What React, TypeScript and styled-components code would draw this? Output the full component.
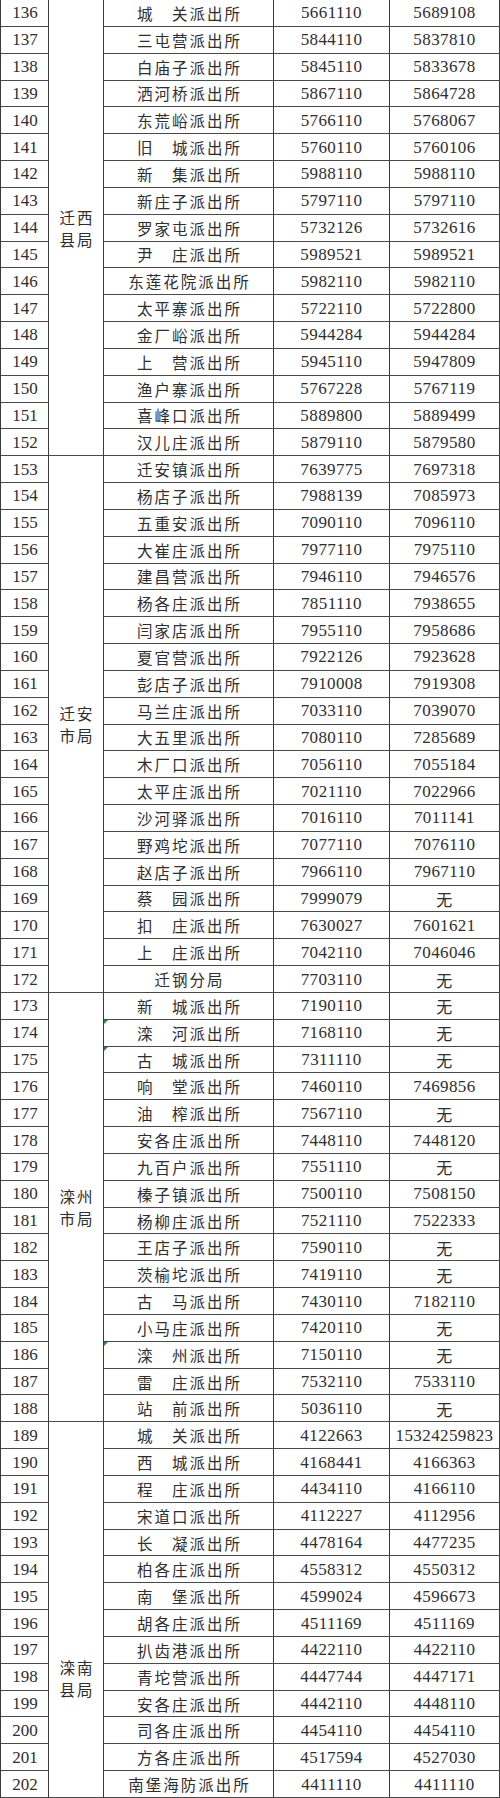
import styled, { createGlobalStyle } from "styled-components";

type Station = [number, string, string, string];

interface Group {
  label: [string, string];
  shift?: number;
  rows: Station[];
}

const GROUPS: Group[] = [
  {
    label: ["迁西", "县局"],
    rows: [
      [136, "城　关派出所", "5661110", "5689108"],
      [137, "三屯营派出所", "5844110", "5837810"],
      [138, "白庙子派出所", "5845110", "5833678"],
      [139, "洒河桥派出所", "5867110", "5864728"],
      [140, "东荒峪派出所", "5766110", "5768067"],
      [141, "旧　城派出所", "5760110", "5760106"],
      [142, "新　集派出所", "5988110", "5988110"],
      [143, "新庄子派出所", "5797110", "5797110"],
      [144, "罗家屯派出所", "5732126", "5732616"],
      [145, "尹　庄派出所", "5989521", "5989521"],
      [146, "东莲花院派出所", "5982110", "5982110"],
      [147, "太平寨派出所", "5722110", "5722800"],
      [148, "金厂峪派出所", "5944284", "5944284"],
      [149, "上　营派出所", "5945110", "5947809"],
      [150, "渔户寨派出所", "5767228", "5767119"],
      [151, "喜峰口派出所", "5889800", "5889499"],
      [152, "汉儿庄派出所", "5879110", "5879580"],
    ],
  },
  {
    label: ["迁安", "市局"],
    rows: [
      [153, "迁安镇派出所", "7639775", "7697318"],
      [154, "杨店子派出所", "7988139", "7085973"],
      [155, "五重安派出所", "7090110", "7096110"],
      [156, "大崔庄派出所", "7977110", "7975110"],
      [157, "建昌营派出所", "7946110", "7946576"],
      [158, "杨各庄派出所", "7851110", "7938655"],
      [159, "闫家店派出所", "7955110", "7958686"],
      [160, "夏官营派出所", "7922126", "7923628"],
      [161, "彭店子派出所", "7910008", "7919308"],
      [162, "马兰庄派出所", "7033110", "7039070"],
      [163, "大五里派出所", "7080110", "7285689"],
      [164, "木厂口派出所", "7056110", "7055184"],
      [165, "太平庄派出所", "7021110", "7022966"],
      [166, "沙河驿派出所", "7016110", "7011141"],
      [167, "野鸡坨派出所", "7077110", "7076110"],
      [168, "赵店子派出所", "7966110", "7967110"],
      [169, "蔡　园派出所", "7999079", "无"],
      [170, "扣　庄派出所", "7630027", "7601621"],
      [171, "上　庄派出所", "7042110", "7046046"],
      [172, "迁钢分局", "7703110", "无"],
    ],
  },
  {
    label: ["滦州", "市局"],
    rows: [
      [173, "新　城派出所", "7190110", "无"],
      [174, "滦　河派出所", "7168110", "无"],
      [175, "古　城派出所", "7311110", "无"],
      [176, "响　堂派出所", "7460110", "7469856"],
      [177, "油　榨派出所", "7567110", "无"],
      [178, "安各庄派出所", "7448110", "7448120"],
      [179, "九百户派出所", "7551110", "无"],
      [180, "榛子镇派出所", "7500110", "7508150"],
      [181, "杨柳庄派出所", "7521110", "7522333"],
      [182, "王店子派出所", "7590110", "无"],
      [183, "茨榆坨派出所", "7419110", "无"],
      [184, "古　马派出所", "7430110", "7182110"],
      [185, "小马庄派出所", "7420110", "无"],
      [186, "滦　州派出所", "7150110", "无"],
      [187, "雷　庄派出所", "7532110", "7533110"],
      [188, "站　前派出所", "5036110", "无"],
    ],
  },
  {
    label: ["滦南", "县局"],
    shift: 136,
    rows: [
      [189, "城　关派出所", "4122663", "15324259823"],
      [190, "西　城派出所", "4168441", "4166363"],
      [191, "程　庄派出所", "4434110", "4166110"],
      [192, "宋道口派出所", "4112227", "4112956"],
      [193, "长　凝派出所", "4478164", "4477235"],
      [194, "柏各庄派出所", "4558312", "4550312"],
      [195, "南　堡派出所", "4599024", "4596673"],
      [196, "胡各庄派出所", "4511169", "4511169"],
      [197, "扒齿港派出所", "4422110", "4422110"],
      [198, "青坨营派出所", "4447744", "4447171"],
      [199, "安各庄派出所", "4442110", "4448110"],
      [200, "司各庄派出所", "4454110", "4454110"],
      [201, "方各庄派出所", "4517594", "4527030"],
      [202, "南堡海防派出所", "4411110", "4411110"],
    ],
  },
];

// cells carrying the little green excel error marker
const FLAGGED = [174, 175, 186];

const TOTAL_ROWS = GROUPS.reduce((n, g) => n + g.rows.length, 0);

const GlobalStyle = createGlobalStyle`
  html, body {
    margin: 0;
    padding: 0;
    background: #fff;
  }
`;

const App = () => {
  return (
    <>
      <GlobalStyle />
      <Sheet $rows={TOTAL_ROWS}>
        {GROUPS.map((group) =>
          group.rows.map(([no, name, office, duty], i) => (
            <Row key={no}>
              <IndexCell>{no}</IndexCell>
              {i === 0 && (
                <GroupCell $span={group.rows.length} $shift={group.shift ?? 0}>
                  <span>{group.label[0]}</span>
                  <span>{group.label[1]}</span>
                </GroupCell>
              )}
              <NameCell $flag={FLAGGED.includes(no)}>{name}</NameCell>
              <PhoneCell $cjk={office === "无"}>{office}</PhoneCell>
              <PhoneCell $cjk={duty === "无"}>{duty}</PhoneCell>
            </Row>
          ))
        )}
      </Sheet>
    </>
  );
};

export default App;

const Sheet = styled.div<{ $rows: number }>`
  display: grid;
  grid-template-columns: 48px 55px 170px 116px 110px;
  grid-template-rows: repeat(${({ $rows }) => $rows}, 1fr);
  width: 500px;
  height: 1798px;
  box-sizing: border-box;
  border-left: 1px solid #3a3a3a;
  color: #2e2e2e;
`;

const Row = styled.div`
  display: contents;
`;

const Cell = styled.div`
  display: flex;
  align-items: center;
  justify-content: center;
  box-sizing: border-box;
  border-right: 1px solid #3a3a3a;
  border-bottom: 1px solid #4a4a4a;
  min-height: 0;
  overflow: hidden;
  white-space: nowrap;
`;

const IndexCell = styled(Cell)`
  grid-column: 1;
  font-family: "Liberation Serif", "Times New Roman", serif;
  font-size: 17px;
  padding-top: 1px;
  padding-left: 1px;
`;

const GroupCell = styled(Cell)<{ $span: number; $shift: number }>`
  grid-column: 2;
  grid-row: span ${({ $span }) => $span};
  flex-direction: column;
  gap: 2px;
  padding-top: ${({ $shift }) => $shift}px;
  font-family: "Noto Sans CJK SC", sans-serif;
  font-size: 15.5px;
  letter-spacing: 2px;
  line-height: 20px;
  padding-left: 2px;
`;

const NameCell = styled(Cell)<{ $flag: boolean }>`
  grid-column: 3;
  position: relative;
  font-family: "Noto Sans CJK SC", sans-serif;
  font-size: 15.5px;
  letter-spacing: 2px;
  padding-left: 2px;

  &::before {
    content: "";
    display: ${({ $flag }) => ($flag ? "block" : "none")};
    position: absolute;
    top: 0;
    left: 0;
    border-top: 4px solid #1f8f3a;
    border-right: 4px solid transparent;
  }
`;

const PhoneCell = styled(Cell)<{ $cjk: boolean }>`
  font-family: ${({ $cjk }) =>
    $cjk ? `"Noto Sans CJK SC", sans-serif` : `"Liberation Serif", "Times New Roman", serif`};
  font-size: ${({ $cjk }) => ($cjk ? "16px" : "17px")};
  letter-spacing: 0.4px;
  padding-top: 1px;
`;
